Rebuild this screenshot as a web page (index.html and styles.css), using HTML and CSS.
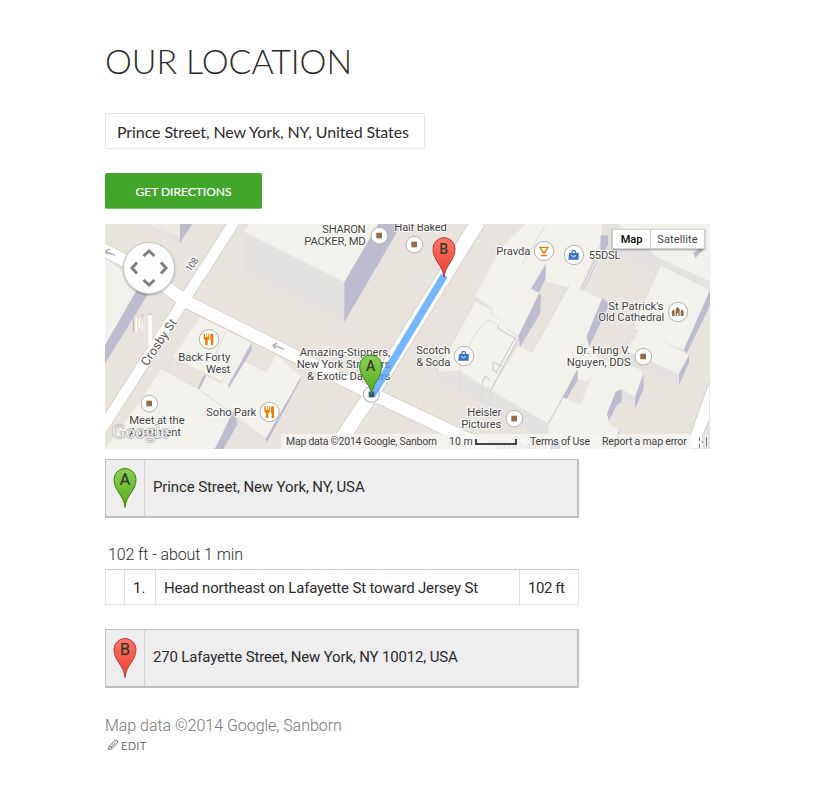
FILE: index.html
```html
<!DOCTYPE html>
<html lang="en">
<head>
<meta charset="utf-8">
<title>Our Location</title>
<link rel="stylesheet" href="styles.css">
</head>
<body>
<main class="page">
  <h1 class="title">Our Location</h1>
  <form class="form">
    <div class="field">Prince Street, New York, NY, United States</div>
    <button class="submit" type="button"><span>Get Directions</span></button>
  </form>

  <section class="map">
    <svg class="canvas" viewBox="0 6 1815 675" preserveAspectRatio="none">
      <defs>
        <linearGradient id="ga" x2="0" y2="1"><stop offset="0" stop-color="#8bd155"/><stop offset="1" stop-color="#55a91c"/></linearGradient>
        <linearGradient id="gb" x2="0" y2="1"><stop offset="0" stop-color="#ff776b"/><stop offset="1" stop-color="#e93c30"/></linearGradient>
        <g id="shop"><circle r="25" fill="#fff" stroke="#b5b1ac" stroke-width="3"/><rect x="-9" y="-9" width="17" height="17" fill="#936c4b"/></g>
        <g id="food"><circle r="29" fill="#fff" stroke="#b5b1ac" stroke-width="3"/><path d="M-16-17v14q0 5 5 6v15h7V3q5-1 5-6v-14h-3v10h-4v-10h-2v10h-4v-10zM4-15v18h2v15h7v-35h-5q-4 0-4 2z" fill="#f57c00"/></g>
        <g id="bag"><circle r="29" fill="#fff" stroke="#b5b1ac" stroke-width="3"/><path d="M-6-5v-4q0-5 5-5t6 5v4" fill="none" stroke="#3c72cc" stroke-width="4"/><path d="M-15-6h29v20h-31z" fill="#3c72cc"/><path d="M-8 1q7 9 14 0" fill="none" stroke="#fff" stroke-width="3"/></g>
      </defs>
      <rect y="6" width="1815" height="675" fill="#e8e4dd"/>

      <g class="wall">
        <path d="M130 6L225 46V64L110 6z"/>
        <path d="M415 28L718 180V300L415 148z"/>
        <path d="M302 458L370 488V500L302 470z"/>
        <path d="M395 585L484 650V662L395 612z"/>
        <path d="M140 610L240 681H150z"/>
      </g>
      <g class="roof">
        <path d="M0 6H225V46L130 6z" opacity=".4"/>
        <path d="M435 6H820L718 180 415 28z"/>
        <path d="M0 108L110 190 0 375z"/>
        <path d="M285 286L440 362 370 488 205 405z"/>
        <path d="M170 440L280 500 302 458 350 483 408 412 485 452 515 398 588 465 484 650 395 585 325 681H0L90 560z"/>
      </g>
      <g class="shade">
        <path d="M225 6H262L225 64z"/>
        <path d="M820 6H890L718 300V180z"/>
        <path d="M95 205L132 212 0 424V370z"/>
        <path d="M440 362V385L370 500V488z"/><path d="M298 458L304 461 284 501 278 498z"/>
        <path d="M588 465V472L486 660 482 650z"/><path d="M390 555L396 610 355 681H330z"/>
      </g>
      <path class="edge" d="M365 325L320 420M205 405L185 440M302 458L350 483 370 440M170 440L280 500 395 585"/>

      <g transform="translate(900 0)">
        <g class="wall">
          <path d="M95 430V470L430 655V600L258 500z"/>
          <path d="M210 222V238L258 264V278L306 304 342 356V340z"/>
          <path d="M422 125V182L485 205 500 185z"/>
          <path d="M590 30V85L750 150 765 130 915 208V160L640 6z"/>
          <path d="M680 318L838 385V400L703 340z"/>
          <path d="M665 380V420L822 490V440z"/>
          <path d="M518 440L561 463 545 490 505 475z"/>
          <path d="M650 500L690 525V560L650 540z"/>
        </g>
        <g class="roof">
          <path d="M210 222L290 75 362 6H590V50L520 205 422 180V125L380 200 407 216 340 343 306 316V302L262 276V258z"/>
          <path d="M210 238L258 264V278L306 304V320L340 348 258 500 232 490 165 445 95 450z"/>
          <path d="M640 6H915V178L760 108z"/>
          <path d="M495 185L608 240 545 350 580 405 700 440 715 455 690 525 650 500 635 508 607 575 610 602 643 625 638 681H430V605L258 505 340 372 380 392z"/>
          <path d="M765 130L915 205 838 385 680 318z"/>
          <path d="M703 325L852 400 822 457 665 385z"/>
        </g>
        <path d="M608 240L690 310 665 385 640 430 575 405 548 360z" fill="#e8e4dd"/>
        <path d="M680 318L703 325 665 385 640 400z" fill="#e3e2e0"/>
        <path d="M703 325L852 400 822 457 665 385z" fill="#f3f1eb"/>
        <path d="M518 470L545 480 561 463 528 545 512 546 487 530z" fill="#e8e4dd"/>
        <g class="shade">
          <path d="M422 125V168L402 212 378 200z"/>
          <path d="M402 214L408 218 405 275 345 375 340 343z"/>
          <path d="M587 40H609V68L586 115z"/>
          <path d="M592 228L608 240V258L552 375 545 342z"/>
          <path d="M518 440V475L485 531 473 525z"/>
          <path d="M915 205V250L845 395 837 382z"/>
          <path d="M852 400V422L822 490V455z"/>
          <path d="M893 70L900 78 871 108 865 94z"/>
          <path d="M716 453V500L690 560V525z"/>
          <path d="M650 502V540L635 550 612 597 606 575 632 510z"/>
          <path d="M643 622V660L635 681H622z"/>
        </g>
        <path class="edge lav" d="M587 95L535 205M580 90L528 203M340 350L258 503M332 345L272 455M276 450L264 445V420L290 432M256 475L240 461 232 485M280 310V320L335 352M474 525L430 605"/>
        <path class="edge" d="M420 10L350 130M495 185L380 392M165 445V420L218 325 248 293 280 310M165 445V500M232 485V540M258 503V550M210 238L95 450M765 130L680 318"/>
      </g>

      <g class="casing"><path d="M-20 75L115 145 237 235 500 367 800 515 1170 690" stroke-width="43"/><path d="M388 0L237 235-20 638" stroke-width="37"/><path d="M1119 0L907 342 800 515 685 688" stroke-width="48"/></g>
      <path d="M1815 474L1740 681H1776L1815 590z" fill="#fff" stroke="#d5cfc7" stroke-width="3"/>
      <g class="road"><path d="M-20 75L115 145 237 235 500 367 800 515 1170 690" stroke-width="37"/><path d="M388 0L237 235-20 638" stroke-width="31"/><path d="M1119 0L907 342 800 515 685 688" stroke-width="42"/></g>
      <path class="arrow" d="M538 382L505 370M516 363L504 370 512 379M30 100L-5 86M14 81L0 88 8 97"/>
      <circle cx="799" cy="517" r="24" fill="#fff" stroke="#aaa" stroke-width="3"/>

      <use href="#shop" x="823" y="41"/><use href="#shop" x="928" y="68"/><use href="#shop" x="133" y="545"/>
      <use href="#shop" x="1228" y="590"/><use href="#shop" x="1615" y="404"/>
      <use href="#food" x="312" y="352"/><use href="#food" x="494" y="570"/>
      <use href="#bag" x="1407" y="99"/><use href="#bag" x="1077" y="402"/><use href="#bag" x="1352" y="673"/>
      <circle cx="1317" cy="87" r="29" fill="#fff" stroke="#b5b1ac" stroke-width="3"/><path d="M1305 76H1329L1321 90H1313zM1317 88V101M1308 101H1326" fill="none" stroke="#f57c00" stroke-width="4"/>
      <circle cx="1719" cy="270" r="29" fill="#fff" stroke="#b5b1ac" stroke-width="3"/><path d="M1701 282V268L1705 262 1709 268V282zM1712 282V262L1718 254 1724 262V282H1720V273H1716V282zM1727 282V268L1731 262 1736 268V282z" fill="#936c4b"/>

      <g class="labels">
        <text x="782" y="32" text-anchor="end" textLength="130">SHARON</text><text x="782" y="68" text-anchor="end" textLength="184">PACKER, MD</text>
        <text x="868" y="26" textLength="158">Half Baked</text>
        <text x="1174" y="98" textLength="102">Pravda</text><text x="1451" y="110" textLength="96">55DSL</text>
        <text x="1676" y="263" text-anchor="end" textLength="166">St Patrick's</text><text x="1678" y="298" text-anchor="end" textLength="198">Old Cathedral</text>
        <text x="1575" y="395" text-anchor="end" textLength="161">Dr. Hung V.</text><text x="1577" y="431" text-anchor="end" textLength="192">Nguyen, DDS</text>
        <text x="1036" y="395" text-anchor="end" textLength="102">Scotch</text><text x="1036" y="431" text-anchor="end" textLength="102">&amp; Soda</text>
        <text x="1189" y="581" text-anchor="end" textLength="102">Heisler</text><text x="1189" y="617" text-anchor="end" textLength="120">Pictures</text>
        <text x="376" y="416" text-anchor="end" textLength="156">Back Forty</text><text x="376" y="452" text-anchor="end" textLength="73">West</text>
        <text x="304" y="581" textLength="150">Soho Park</text>
        <text x="73" y="606" textLength="166">Meet at the</text><text x="73" y="641" textLength="155">Apartment</text>
        <text x="856" y="403" text-anchor="end" textLength="272">Amazing-Stippers,</text><text x="856" y="439" text-anchor="end" textLength="281">New York Strippers</text><text x="856" y="475" text-anchor="end" textLength="250">&amp; Exotic Dancers</text>
        <text class="street" transform="translate(127 434) rotate(-56)" textLength="160">Crosby St</text>
        <text class="small" transform="translate(256 151) rotate(-55)" textLength="44">108</text>
        <text x="1173" y="683" opacity=".5" textLength="134">Do Kham</text>
        <text class="google" x="20" y="648" textLength="172">Google</text>
      </g>
      <path d="M1018 160L801 520" stroke="#4aa0ff" stroke-opacity=".76" stroke-width="22"/>
      <rect x="791" y="509" width="17" height="17" fill="#31567e"/>
      <path d="M130 277h11v105l-11-12z" fill="#fff"/><path d="M130 277h11M85 288v40M112 276v10" stroke="#999" stroke-width="2"/><path d="M94 285v44M103 290v28M112 300v24" stroke="#fff" stroke-width="3"/>

      <g stroke-width="3">
        <path d="M799 518C796 482 764 468 764 432A33 33 0 0 1 830 432C830 468 803 482 799 518z" fill="url(#ga)" stroke="#438016"/>
        <text class="pin" x="797" y="446">A</text>
        <path d="M1017 166C1014 130 984 116 984 80A33 33 0 0 1 1050 80C1050 116 1020 130 1017 166z" fill="url(#gb)" stroke="#b73a33"/>
        <text class="pin" x="1016" y="97">B</text>
      </g>
    </svg>
    <svg class="pan" viewBox="0 0 54 54"><circle cx="27" cy="27" r="25.5" fill="#fefefe" stroke="#c9c7c4"/><path d="M21.500 15l5.500-5 5.500 5M21.500 39l5.500 5 5.500-5M15 21.500l-5 5.500 5 5.500M39 21.500l5 5.500-5 5.500" fill="none" stroke="#808080" stroke-width="3"/></svg>
    <div class="types"><span class="type active">Map</span><span class="type">Satellite</span></div>
    <div class="legal">
      <span class="credit">Map data ©2014 Google, Sanborn</span>
      <span class="scale">10 m</span><i class="ruler"></i>
      <span class="terms">Terms of Use</span>
      <span class="report">Report a map error</span>
    </div>
    <svg class="glitch" viewBox="0 0 12 14"><path d="M1 1v12M4 1v12M9.500 1v12" stroke="#fff" stroke-width="2"/><path d="M2.500 2v4M2.500 9v4M4.500 7h2M9.500 2v10" stroke="#777"/></svg>
  </section>

  <section class="route">
    <div class="stop">
      <div class="marker"><svg viewBox="0 0 24 42"><path d="M12 40.500C11 28 1 24 1 12.500A11 11 0 0 1 23 12.500C23 24 13 28 12 40.500z" fill="url(#ga)" stroke="#438016"/><text class="letter" x="12" y="18">A</text></svg></div>
      <div class="address"><span class="from">Prince Street, New York, NY, USA</span></div>
    </div>
    <p class="summary"><span>102 ft - about 1 min</span></p>
    <div class="step">
      <span></span><span class="num">1.</span><span class="text">Head northeast on Lafayette St toward Jersey St</span><span class="dist">102 ft</span>
    </div>
    <div class="stop">
      <div class="marker"><svg viewBox="0 0 24 42"><path d="M12 40.500C11 28 1 24 1 12.500A11 11 0 0 1 23 12.500C23 24 13 28 12 40.500z" fill="url(#gb)" stroke="#b73a33"/><text class="letter" x="12" y="18">B</text></svg></div>
      <div class="address"><span class="to">270 Lafayette Street, New York, NY 10012, USA</span></div>
    </div>
    <p class="copyright"><span>Map data ©2014 Google, Sanborn</span></p>
  </section>
  <a class="edit"><svg viewBox="0 0 12 12"><path d="M1.500 10.500l.8-3.300L7.800 1.600Q9 .6 10.200 1.800T10.400 4.200L4.800 9.700zM3 7l2 2M4 8.300l5-5" fill="none" stroke="#767676"/></svg><span>Edit</span></a>
</main>
</body>
</html>
```
FILE: styles.css
```css
* { box-sizing: border-box; }
body { margin: 0; background: #fff; color: #2b2b2b; font-family: Lato, sans-serif; }
.page { width: 605px; margin: 0 0 0 105px; padding-top: 42px; }
.title { margin: 0; font-size: 34px; line-height: 38px; font-weight: 300; letter-spacing: -.1px; text-transform: uppercase; white-space: nowrap; }
.form { margin: 33px 0 0; }
.field { width: 320px; height: 36px; padding: 0 11px; border: 1px solid #e5e5e5; border-radius: 2px; font-size: 16px; line-height: 36px; letter-spacing: -.1px; white-space: nowrap; }
.submit { display: block; width: 157px; height: 36px; margin-top: 24px; padding: 2px 0 0; border: 0; border-radius: 2px; border-bottom: 1px solid #7cc167; background: #41a62a; color: #fff; font: 400 12px/32px Lato, sans-serif; text-transform: uppercase; -webkit-text-stroke: .2px #fff; }
.map { position: relative; height: 225px; margin-top: 15px; overflow: hidden; font-family: Roboto, sans-serif; }
.canvas { display: block; width: 605px; height: 225px; }
.wall { fill: #e3e2e0; }
.roof { fill: #f3f1eb; }
.shade { fill: #bdbbce; }
.edge { fill: none; stroke: #dddbd8; stroke-width: 3; }
.edge.lav { stroke: #c6c4d6; }
.casing { fill: none; stroke: #d8d2ca; }
.road { fill: none; stroke: #fff; }
.arrow { fill: none; stroke: #b5b3c8; stroke-width: 5; }
.labels text { font: 400 34px Roboto, sans-serif; fill: #444; stroke: rgba(255,255,255,.7); stroke-width: 7px; paint-order: stroke; stroke-linejoin: round; }
.labels .street { font-size: 37px; fill: #555; }
.labels .small { font-size: 28px; fill: #666; }
.labels .google { font: 400 58px "Liberation Serif", serif; fill: #fff; fill-opacity: .85; stroke: #aaa; stroke-width: 4px; }
.pin { font: 500 42px Roboto, sans-serif; fill: #3b3b2b; text-anchor: middle; }
.pan { position: absolute; left: 17px; top: 17px; width: 54px; height: 54px; filter: drop-shadow(0 1px 1px rgba(0,0,0,.3)); }
.types { position: absolute; left: 507px; top: 5px; display: flex; height: 20px; background: #fff; border: 1px solid #d0d0d0; box-shadow: 0 1px 2px rgba(0,0,0,.35); font-size: 11px; line-height: 19px; text-align: center; color: #444; }
.type { width: 53px; letter-spacing: .1px; }
.type.active { width: 38px; border-right: 1px solid #ccc; color: #000; font-weight: 500; letter-spacing: 0; }
.legal { position: absolute; left: 176px; bottom: 0; display: flex; align-items: center; width: 411px; height: 15px; padding-left: 5px; background: rgba(247,246,244,.78); font-size: 10.500px; line-height: 15px; color: #444; white-space: nowrap; }
.credit { width: 163px; letter-spacing: -.24px; }
.scale { width: 26px; }
.ruler { width: 42px; height: 6px; border: 2px solid #444; border-top: 0; }
.terms { margin-left: 13px; width: 72px; letter-spacing: -.2px; }
.report { letter-spacing: -.17px; }
.glitch { position: absolute; right: 1px; bottom: 0; width: 12px; height: 14px; }
.route { width: 474px; margin-top: 10px; font-family: Roboto, sans-serif; font-size: 15px; white-space: nowrap; }
.stop { display: flex; height: 59px; border: 1px solid #c0c0c0; border-right: 2px solid #c0c0c0; border-bottom: 2px solid #c0c0c0; background: #eee; }
.marker { width: 39px; padding: 7px 0 0 7px; border-right: 1px solid #d2d2d2; }
.marker svg { display: block; width: 24px; height: 42px; }
.letter { font: 400 16px Roboto, sans-serif; fill: #30372a; stroke: #30372a; stroke-width: .2px; text-anchor: middle; }
.address { padding-left: 8px; line-height: 54px; }
.from { letter-spacing: -.12px; }
.to { letter-spacing: -.16px; }
.summary { margin: 24px 0 0 3px; height: 27px; font-size: 16px; line-height: 25px; font-weight: 300; letter-spacing: -.1px; }
.step { display: grid; grid-template-columns: 19px 31px 364px 1fr; height: 36px; margin-bottom: 24px; border: 1px solid #e2e2e2; border-top-color: #c8c8c8; line-height: 36px; }
.step > span { padding-left: 8px; border-right: 1px solid #e0e0e0; }
.step > span:last-child { border-right: 0; }
.text { letter-spacing: -.18px; }
.dist { letter-spacing: -.45px; }
.copyright { margin: 26px 0 0; font-size: 16px; line-height: 24px; font-weight: 300; letter-spacing: -.04px; color: #767676; }
.edit { display: flex; align-items: center; height: 14px; padding-left: 2px; color: #767676; font-size: 11px; letter-spacing: .3px; text-transform: uppercase; }
.edit svg { width: 12px; height: 12px; margin-right: 2px; }
```
